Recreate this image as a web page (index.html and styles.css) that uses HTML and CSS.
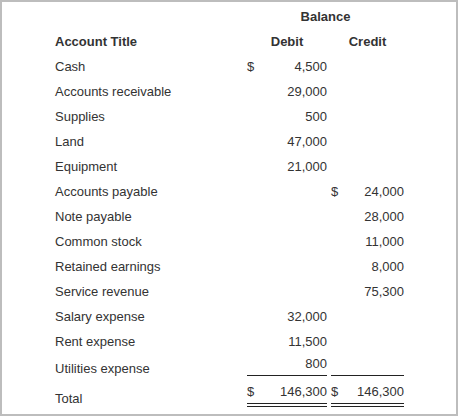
FILE: index.html
```html
<!DOCTYPE html>
<html>
<head>
<meta charset="utf-8">
<link rel="stylesheet" href="styles.css">
</head>
<body>
<div class="frame">
  <div class="row">
    <div class="label"></div>
    <div class="span bold">Balance</div>
  </div>
  <div class="row">
    <div class="label bold">Account Title</div>
    <div class="debit center bold">Debit</div>
    <div class="gap"></div>
    <div class="credit center bold">Credit</div>
  </div>
  <div class="row">
    <div class="label">Cash</div>
    <div class="debit"><span>$</span><span>4,500</span></div>
    <div class="gap"></div>
    <div class="credit"></div>
  </div>
  <div class="row">
    <div class="label">Accounts receivable</div>
    <div class="debit"><span></span><span>29,000</span></div>
    <div class="gap"></div>
    <div class="credit"></div>
  </div>
  <div class="row">
    <div class="label">Supplies</div>
    <div class="debit"><span></span><span>500</span></div>
    <div class="gap"></div>
    <div class="credit"></div>
  </div>
  <div class="row">
    <div class="label">Land</div>
    <div class="debit"><span></span><span>47,000</span></div>
    <div class="gap"></div>
    <div class="credit"></div>
  </div>
  <div class="row">
    <div class="label">Equipment</div>
    <div class="debit"><span></span><span>21,000</span></div>
    <div class="gap"></div>
    <div class="credit"></div>
  </div>
  <div class="row">
    <div class="label">Accounts payable</div>
    <div class="debit"></div>
    <div class="gap"></div>
    <div class="credit"><span>$</span><span>24,000</span></div>
  </div>
  <div class="row">
    <div class="label">Note payable</div>
    <div class="debit"></div>
    <div class="gap"></div>
    <div class="credit"><span></span><span>28,000</span></div>
  </div>
  <div class="row">
    <div class="label">Common stock</div>
    <div class="debit"></div>
    <div class="gap"></div>
    <div class="credit"><span></span><span>11,000</span></div>
  </div>
  <div class="row">
    <div class="label">Retained earnings</div>
    <div class="debit"></div>
    <div class="gap"></div>
    <div class="credit"><span></span><span>8,000</span></div>
  </div>
  <div class="row">
    <div class="label">Service revenue</div>
    <div class="debit"></div>
    <div class="gap"></div>
    <div class="credit"><span></span><span>75,300</span></div>
  </div>
  <div class="row">
    <div class="label">Salary expense</div>
    <div class="debit"><span></span><span>32,000</span></div>
    <div class="gap"></div>
    <div class="credit"></div>
  </div>
  <div class="row">
    <div class="label">Rent expense</div>
    <div class="debit"><span></span><span>11,500</span></div>
    <div class="gap"></div>
    <div class="credit"></div>
  </div>
  <div class="row row-sub">
    <div class="label">Utilities expense</div>
    <div class="debit"><span></span><span>800</span></div>
    <div class="gap"></div>
    <div class="credit"></div>
  </div>
  <div class="row row-total">
    <div class="label">Total</div>
    <div class="debit"><span>$</span><span>146,300</span></div>
    <div class="gap"></div>
    <div class="credit"><span>$</span><span>146,300</span></div>
  </div>
</div>
</body>
</html>
```
FILE: styles.css
```css
html, body {
  margin: 0;
  padding: 0;
  background: #ffffff;
}

.frame {
  box-sizing: border-box;
  width: 458px;
  height: 416px;
  border: 2px solid #bdbdbd;
  padding: 2px 0 0 53px;
  font-family: "Liberation Sans", Arial, sans-serif;
  font-size: 13px;
  color: #333333;
}

.row {
  display: grid;
  grid-template-columns: 192px 80px 4px 73px;
  height: 25px;
  line-height: 25px;
}

.bold {
  font-weight: bold;
}

.span {
  grid-column: 2 / 5;
  text-align: center;
}

.debit,
.credit {
  display: flex;
  justify-content: space-between;
}

.center {
  justify-content: center;
}

.row-sub {
  height: auto;
  line-height: 15px;
}

.row-sub .label {
  padding-top: 7px;
}

.row-sub .debit,
.row-sub .credit {
  padding: 2px 0 2px;
  border-bottom: 1px solid #222222;
}

.row-total {
  height: auto;
  line-height: 15px;
}

.row-total .label {
  padding-top: 15px;
}

.row-total .debit,
.row-total .credit {
  padding: 8px 0 4px;
  border-bottom: 4px double #222222;
}
```
